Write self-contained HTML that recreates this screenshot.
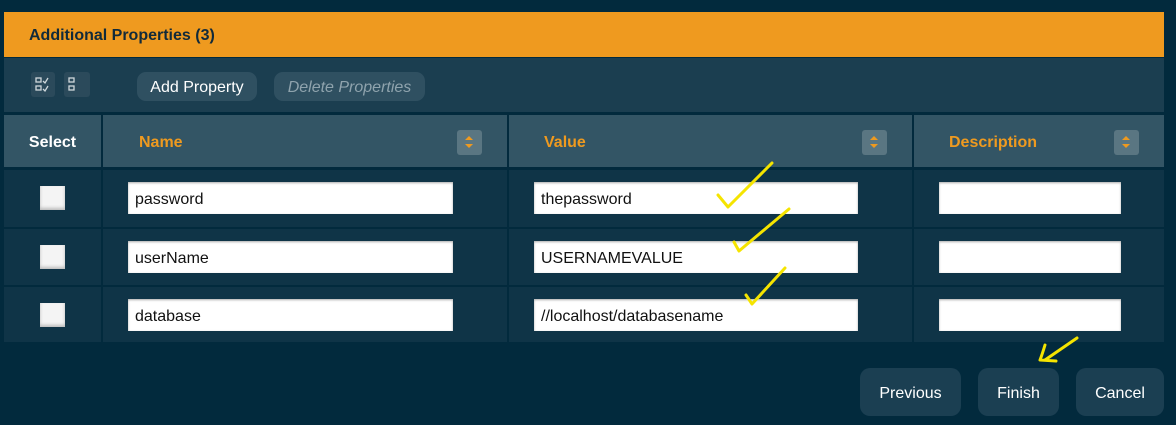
<!DOCTYPE html>
<html><head><style>
*{margin:0;padding:0;box-sizing:border-box}
body{width:1176px;height:425px;background:#022a3d;font-family:"Liberation Sans",sans-serif;position:relative;overflow:hidden}
.a{position:absolute}
.hdr{left:4px;top:12px;width:1160px;height:45px;background:#ef9a1f;color:#112a3a;font-weight:bold;font-size:16px;line-height:47px;padding-left:25px}
.tb{left:4px;top:58px;width:1160px;height:54px;background:#1b3e50}
.btn{background:#2f5061;border-radius:9px;color:#fff;font-size:16px;text-align:center}
.th{top:115px;height:52px;background:#335565;font-weight:bold;font-size:16px;line-height:55px}
.td{background:#0f3447}
.inp{background:#fff;height:32px;font-size:16px;line-height:35px;padding-left:7px;color:#111;box-shadow:inset 0 1px 2px #aaa}
.cb{background:#f4f4f4;width:25px;height:24px;box-shadow:inset 0 -2px 3px #bbb}
.sort{width:25px;height:25px;background:#5a7682;border-radius:3px}
.fb{background:#1b3f52;border-radius:10px;color:#fff;font-size:16px;text-align:center;line-height:51px;top:368px;height:48px}
</style></head><body>
<div class="a hdr">Additional Properties (3)</div>
<div class="a tb"></div>
<div class="a" style="left:31px;top:72px;width:24px;height:25px;background:#2b4a5b;border-radius:3px"></div>
<div class="a" style="left:64px;top:72px;width:26px;height:25px;background:#2b4a5b;border-radius:3px"></div>
<svg class="a" style="left:31px;top:72px" width="60" height="25" fill="none" stroke="#cfd8dc" stroke-width="1.3"><rect x="5" y="6" width="5" height="4"/><rect x="5" y="14" width="5" height="4"/><path d="M12 9l2 2 3-5M12 17l2 2 3-5"/><rect x="38" y="6" width="5" height="4"/><rect x="38" y="14" width="5" height="4"/></svg>
<div class="a btn" style="left:137px;top:72px;width:120px;height:29px;line-height:31px">Add Property</div>
<div class="a btn" style="left:274px;top:72px;width:151px;height:29px;line-height:31px;color:#8fa3ad;font-style:italic">Delete Properties</div>
<div class="a th" style="left:4px;width:97px;color:#fff;text-align:center">Select</div>
<div class="a th" style="left:103px;width:404px;color:#ef9a1f;padding-left:36px">Name</div>
<div class="a th" style="left:509px;width:403px;color:#ef9a1f;padding-left:35px">Value</div>
<div class="a th" style="left:914px;width:250px;color:#ef9a1f;padding-left:35px">Description</div>
<div class="a sort" style="left:457px;top:130px"></div>
<div class="a sort" style="left:862px;top:130px"></div>
<div class="a sort" style="left:1114px;top:130px"></div>
<svg class="a" style="left:0;top:0" width="1176" height="425"><g fill="#ef9a1f"><path d="M465 140l4-4 4 4zM465 144l4 4 4-4z"/><path d="M870 140l4-4 4 4zM870 144l4 4 4-4z"/><path d="M1122 140l4-4 4 4zM1122 144l4 4 4-4z"/></g></svg>
<div class="a td" style="left:4px;top:170px;width:97px;height:57px"></div><div class="a td" style="left:103px;top:170px;width:404px;height:57px"></div><div class="a td" style="left:509px;top:170px;width:403px;height:57px"></div><div class="a td" style="left:914px;top:170px;width:250px;height:57px"></div>
<div class="a td" style="left:4px;top:229px;width:97px;height:56px"></div><div class="a td" style="left:103px;top:229px;width:404px;height:56px"></div><div class="a td" style="left:509px;top:229px;width:403px;height:56px"></div><div class="a td" style="left:914px;top:229px;width:250px;height:56px"></div>
<div class="a td" style="left:4px;top:287px;width:97px;height:55px"></div><div class="a td" style="left:103px;top:287px;width:404px;height:55px"></div><div class="a td" style="left:509px;top:287px;width:403px;height:55px"></div><div class="a td" style="left:914px;top:287px;width:250px;height:55px"></div>
<div class="a cb" style="left:40px;top:186px"></div><div class="a cb" style="left:40px;top:245px"></div><div class="a cb" style="left:40px;top:303px"></div>
<div class="a inp" style="left:128px;top:182px;width:325px">password</div>
<div class="a inp" style="left:128px;top:241px;width:325px">userName</div>
<div class="a inp" style="left:128px;top:299px;width:325px">database</div>
<div class="a inp" style="left:534px;top:182px;width:324px">thepassword</div>
<div class="a inp" style="left:534px;top:241px;width:324px">USERNAMEVALUE</div>
<div class="a inp" style="left:534px;top:299px;width:324px">//localhost/databasename</div>
<div class="a inp" style="left:939px;top:182px;width:182px"></div>
<div class="a inp" style="left:939px;top:241px;width:182px"></div>
<div class="a inp" style="left:939px;top:299px;width:182px"></div>
<div class="a fb" style="left:860px;width:101px">Previous</div>
<div class="a fb" style="left:978px;width:81px">Finish</div>
<div class="a fb" style="left:1076px;width:88px">Cancel</div>
<svg class="a" style="left:0;top:0" width="1176" height="425" fill="none" stroke="#f5e400" stroke-width="3" stroke-linecap="round" stroke-linejoin="round"><path d="M718 195l10 12 44-44"/><path d="M734 242l5 9 50-42"/><path d="M746 295l6 9 33-36"/><path d="M1077 338l-32 22M1045 345q-3 10 -5 15 l16 1"/></svg>
</body></html>
